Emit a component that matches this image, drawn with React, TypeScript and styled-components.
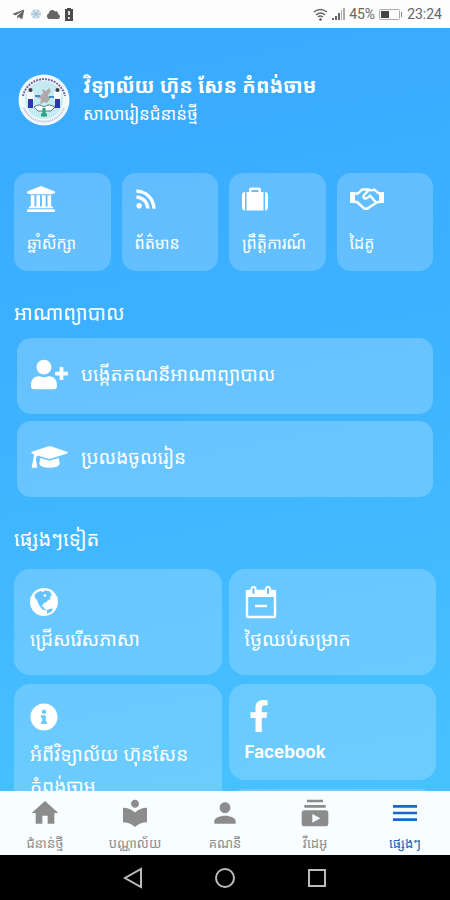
import React from 'react';
import styled, { createGlobalStyle } from 'styled-components';
import {
  FaRss,
  FaUserPlus,
  FaInfoCircle,
  FaFacebookF,
  FaTelegramPlane,
  FaCloud,
} from 'react-icons/fa';
import { MdHome, MdLocalLibrary, MdPerson, MdSubscriptions, MdMenu } from 'react-icons/md';

const GlobalStyle = createGlobalStyle`
  * { box-sizing: border-box; }
  body { margin: 0; font-family: "Noto Sans Khmer", "Noto Sans", "DejaVu Sans", sans-serif; }
  button { font: inherit; color: inherit; border: 0; background: none; padding: 0; text-align: left; cursor: pointer; }
  h1, h2, p { margin: 0; font-weight: 400; }
  svg { display: block; flex: none; }
`;

const Screen = styled.div`
  display: flex;
  flex-direction: column;
  height: 100vh;
  overflow: hidden;
`;

const StatusBar = styled.div`
  display: flex;
  align-items: center;
  justify-content: space-between;
  flex: none;
  height: 28px;
  padding: 0 8px 0 12px;
  background: #fdfdfd;
  color: #666;
  font: 14px Roboto, sans-serif;
`;

const StatusGroup = styled.div<{ $gap: number }>`
  display: flex;
  align-items: center;
  gap: ${(p) => p.$gap}px;
`;

const Content = styled.main`
  flex: 1;
  min-height: 0;
  overflow: hidden;
  padding: 0 14px;
  background: linear-gradient(170deg, #39a9ff 0%, #3db2ff 45%, #48c2ff 100%);
  color: #fff;
`;

const Header = styled.header`
  display: flex;
  align-items: center;
  gap: 13px;
  height: 145px;
  padding: 0 4px 2px;
`;

const Title = styled.h1`
  font-size: 20px;
  line-height: 28px;
  font-weight: 700;
`;

const Subtitle = styled.p`
  font-size: 17px;
  line-height: 28px;
`;

const Shortcuts = styled.nav`
  display: grid;
  grid-template-columns: repeat(4, 1fr);
  gap: 11px;
  padding-right: 3px;
`;

const Shortcut = styled.button`
  && {
    display: flex;
    flex-direction: column;
    justify-content: space-between;
    height: 98px;
    padding: 13px 0 13px 13px;
    border-radius: 14px;
    background: rgba(255, 255, 255, 0.2);
    font-size: 16px;
    line-height: 30px;
    white-space: nowrap;
  }
`;

const IconSlot = styled.span<{ $height: number }>`
  display: flex;
  align-items: center;
  height: ${(p) => p.$height}px;
`;

const SectionTitle = styled.h2`
  height: 67px;
  padding-top: 26px;
  font-size: 20px;
  line-height: 32px;
`;

const Rows = styled.div`
  display: flex;
  flex-direction: column;
  gap: 7px;
  padding: 0 3px;
`;

const Row = styled.button`
  && {
    display: flex;
    align-items: center;
    height: 76px;
    padding: 0 14px 4px;
    gap: 13px;
    border-radius: 14px;
    background: rgba(255, 255, 255, 0.22);
    font-size: 19px;
    line-height: 32px;
  }
`;

const Columns = styled.div`
  display: grid;
  grid-template-columns: 1fr 1fr;
  align-items: start;
  gap: 7px;
  padding-top: 5px;
`;

const Column = styled.div`
  display: flex;
  flex-direction: column;
  gap: 9px;
`;

const Card = styled.button<{ $height: number }>`
  && {
    display: flex;
    flex-direction: column;
    align-items: flex-start;
    gap: 4px;
    min-height: ${(p) => p.$height}px;
    padding: 16px 16px 8px;
    border-radius: 16px;
    background: rgba(255, 255, 255, 0.2);
    font-size: 19px;
    line-height: 32px;
  }
`;

const Latin = styled.span`
  font: 700 17px/32px Inter, sans-serif;
`;

const TabBar = styled.nav`
  display: grid;
  grid-template-columns: repeat(5, 1fr);
  flex: none;
  height: 64px;
  background: #f8fdff;
`;

const Tab = styled.button<{ $active?: boolean }>`
  && {
    display: flex;
    flex-direction: column;
    align-items: center;
    gap: 2px;
    padding-top: 6px;
    color: ${(p) => (p.$active ? '#1769c4' : '#8c8c8c')};
    font-size: 13px;
    line-height: 24px;
    white-space: nowrap;
  }
`;

const SystemBar = styled.div`
  display: flex;
  align-items: center;
  justify-content: center;
  gap: 68px;
  flex: none;
  height: 45px;
  background: #000;
`;

const BankIcon = () => (
  <svg width="28" height="26" viewBox="0 0 1920 1792" fill="currentColor" aria-hidden="true">
    <path d="M960 0l960 384v128h-128q0 26 -20 45t-49 19H197q-28 0-49-19t-20-45H0V384zM256 640h256v768h128V640h256v768h128V640h256v768h128V640h256v768h59q28 0 49 19t20 45v64H128v-64q0-26 20-45t49-19h59zM1851 1600q28 0 49 19t20 45v128H0v-128q0-26 20-45t49-19z" />
  </svg>
);

const SuitcaseIcon = () => (
  <svg width="26" height="24" viewBox="0 0 26 24" fill="#fff" aria-hidden="true">
    <path d="M3 5v18.500Q0 23.500 0 20V8q0-3 3-3zM23 5v18.500q3 0 3-3.500V8q0-3-3-3z" />
    <path d="M4.500 5H7V2.500Q7 .5 9 .5h8q2 0 2 2V5h2.500v18.500h-17zM9.500 5h7V3h-7z" />
  </svg>
);

const HandshakeIcon = () => (
  <svg width="34" height="24" viewBox="0 0 34 24" fill="none" stroke="#fff" strokeWidth="2.400" strokeLinejoin="round" strokeLinecap="round" aria-hidden="true">
    <path d="M0 5h5v11H0zM29 5h5v11h-5z" fill="#fff" stroke="none" />
    <path d="M5 6.500h3l4-4h7l2.500 1L24 2.500l5 4M5 15h2l6 5.500q3 2.500 6 0L27.500 15H29" />
    <path d="M19 3l-5 5q-1.500 3 1 3.500 2 .5 5-3l6 7" />
  </svg>
);

const CapIcon = () => (
  <svg width="37" height="24" viewBox="0 0 38 24" fill="#fff" aria-hidden="true">
    <path d="M1 6.500L17 1.300q2-.6 4 0L37 6.500q1.500 1 0 2L21 13.500q-2 .6-4 0L7 10.500q-2 1-2 4l1.500 7.500q0 1-1 1h-4q-1 0-.8-1L2.500 14q0-3 1-4.500L1 8.500q-1.500-1 0-2z" />
    <path d="M9.500 13l7 2.200q2.500.8 5 0l7-2.200 1 6q-1 4-10.500 4T8.500 19z" />
  </svg>
);

const GlobeIcon = () => (
  <svg width="28" height="28" viewBox="0 0 28 28" aria-hidden="true">
    <circle cx="14" cy="14" r="14" fill="#fff" />
    <path
      fill="#65c4ff"
      d="M4.500 6.500L8 4l3-1 2 1 2-1.500 4 .5 2 2 .5 3-2 1 1.500 2-3 1-1.500 2-2.500 1-1.500 2-1 1 2 1 1 2 2 .5-1 1-3-1-2.500-3L8 15l-1-3-2-2zM17 22l4-1.500 2 .5-2 3-4 1.500z"
    />
    <path fill="#fff" d="M14 6l2.500 1-1 2-2-1z" />
  </svg>
);

const CalendarIcon = () => (
  <svg width="32" height="34" viewBox="0 0 32 34" fill="none" aria-hidden="true">
    <rect x="2" y="6" width="28" height="26" rx="1" stroke="#fff" strokeWidth="2.400" />
    <path d="M1 5h30v7H1z" fill="#fff" />
    <rect x="6.500" y="2" width="4" height="8" rx="2" fill="#60bfff" stroke="#fff" strokeWidth="2" />
    <rect x="21" y="2" width="4" height="8" rx="2" fill="#60bfff" stroke="#fff" strokeWidth="2" />
    <path d="M10 21h12" stroke="#fff" strokeWidth="2.400" />
  </svg>
);

const FacebookIcon = () => <FaFacebookF size={32} viewBox="32 0 320 512" width="20" />;

const SchoolLogo = () => (
  <svg width="52" height="52" viewBox="0 0 52 52" role="img" aria-label="School logo">
    <circle cx="26" cy="26" r="25.500" fill="#f1fafc" />
    <path d="M5 22a21.500 21.500 0 0 1 42 0" fill="none" stroke="#7d63a8" strokeWidth="2" strokeDasharray="2 1" />
    <path d="M6 34a21.500 21.500 0 0 0 40 0" fill="none" stroke="#b9b2d6" strokeWidth="2" strokeDasharray="1 1" />
    <circle cx="26" cy="26" r="19" fill="#c4ebf2" />
    <path d="M9 18h7v9H9zM36 18h7v9h-7z" fill="#f5fbff" />
    <path d="M10 25h5v9h-5zM37 25h5v9h-5z" fill="#2d36b0" />
    <circle cx="12.500" cy="16" r="2" fill="#493a43" />
    <circle cx="39.500" cy="16" r="2" fill="#493a43" />
    <path d="M24 15l4 2 3-3 2 3-3 4 2 4-3 4-3-1-4 2 1-5-5-2 5-2 2-2z" fill="#b0a9ab" />
    <path d="M16 33q5-4 10 0 5-4 11 0l-4 4H20z" fill="#fafdff" stroke="#567b82" strokeWidth="1" />
    <path d="M26 34v6M23 41h6" stroke="#26a184" strokeWidth="3" />
    <path d="M17 22h5M31 23h5" stroke="#438fc4" strokeWidth="2" />
  </svg>
);

const FlakeIcon = () => (
  <svg width="12" height="12" viewBox="0 0 12 12" aria-hidden="true">
    <circle cx="6" cy="6" r="5" fill="#d3e4ef" />
    <path d="M3 2l6 8M9 2L3 10M1 6h10" stroke="#9bb9cc" />
  </svg>
);

const ChargeIcon = () => (
  <svg width="8" height="13" viewBox="0 0 8 13" aria-hidden="true">
    <path d="M2 0h4v1h2v12H0V1h2z" fill="#4b4b4b" />
    <path d="M4 3v4M4 9v2" stroke="#ddd" strokeWidth="2" />
  </svg>
);

const WifiIcon = () => (
  <svg width="15" height="13" viewBox="0 0 15 13" fill="none" stroke="#666" aria-hidden="true">
    <path d="M1 4q6-5 13 0M3 7q5-4 9 0M5 9q2-2 5 0" strokeWidth="1.400" />
    <circle cx="7.500" cy="11.500" r="1" fill="#666" />
  </svg>
);

const SignalIcon = () => (
  <svg width="13" height="12" viewBox="0 0 13 12" aria-hidden="true">
    <path d="M0 12v-2h2v2zM3 12V8h2v4zM6 12V5h2v7z" fill="#666" />
    <path d="M9 12V2h1v10zM11 12V0h2v12z" fill="#aaa" />
  </svg>
);

const BatteryIcon = () => (
  <svg width="24" height="11" viewBox="0 0 24 11" aria-hidden="true">
    <rect x="0.500" y="0.500" width="20" height="10" rx="1" fill="none" stroke="#aaa" />
    <path d="M2 2h8v7H2z" fill="#444" />
    <path d="M22 3h1v5h-1z" fill="#888" />
  </svg>
);

const shortcuts = [
  { label: 'ឆ្នាំសិក្សា', icon: <BankIcon /> },
  { label: 'ព័ត៌មាន', icon: <FaRss size={22} /> },
  { label: 'ព្រឹត្តិការណ៍', icon: <SuitcaseIcon /> },
  { label: 'ដៃគូ', icon: <HandshakeIcon /> },
];

const tabs = [
  { label: 'ជំនាន់ថ្មី', icon: <MdHome size={32} /> },
  { label: 'បណ្ណាល័យ', icon: <MdLocalLibrary size={32} /> },
  { label: 'គណនី', icon: <MdPerson size={32} /> },
  { label: 'វីដេអូ', icon: <MdSubscriptions size={32} /> },
  { label: 'ផ្សេងៗ', icon: <MdMenu size={32} />, active: true },
];

export default function App() {
  return (
    <Screen lang="km">
      <GlobalStyle />
      <StatusBar>
        <StatusGroup $gap={5}>
          <FaTelegramPlane size={13} />
          <FlakeIcon />
          <FaCloud size={13} />
          <ChargeIcon />
        </StatusGroup>
        <StatusGroup $gap={4}>
          <WifiIcon />
          <SignalIcon />
          <span>45%</span>
          <BatteryIcon />
          <span>23:24</span>
        </StatusGroup>
      </StatusBar>
      <Content>
        <Header>
          <SchoolLogo />
          <div>
            <Title>វិទ្យាល័យ ហ៊ុន សែន កំពង់ចាម</Title>
            <Subtitle>សាលារៀនជំនាន់ថ្មី</Subtitle>
          </div>
        </Header>
        <Shortcuts>
          {shortcuts.map((s) => (
            <Shortcut key={s.label}>
              <IconSlot $height={26}>{s.icon}</IconSlot>
              <span>{s.label}</span>
            </Shortcut>
          ))}
        </Shortcuts>
        <SectionTitle>អាណាព្យាបាល</SectionTitle>
        <Rows>
          <Row>
            <FaUserPlus size={37} />
            <span>បង្កើតគណនីអាណាព្យាបាល</span>
          </Row>
          <Row>
            <CapIcon />
            <span>ប្រលងចូលរៀន</span>
          </Row>
        </Rows>
        <SectionTitle>ផ្សេងៗទៀត</SectionTitle>
        <Columns>
          <Column>
            <Card $height={106}>
              <IconSlot $height={34}>
                <GlobeIcon />
              </IconSlot>
              <span>ជ្រើសរើសភាសា</span>
            </Card>
            <Card $height={138}>
              <IconSlot $height={34}>
                <FaInfoCircle size={28} />
              </IconSlot>
              <span>អំពីវិទ្យាល័យ ហ៊ុនសែន កំពង់ចាម</span>
            </Card>
          </Column>
          <Column>
            <Card $height={106}>
              <IconSlot $height={34}>
                <CalendarIcon />
              </IconSlot>
              <span>ថ្ងៃឈប់សម្រាក</span>
            </Card>
            <Card $height={96}>
              <IconSlot $height={32}>
                <FacebookIcon />
              </IconSlot>
              <Latin lang="en">Facebook</Latin>
            </Card>
            <Card $height={96} />
          </Column>
        </Columns>
      </Content>
      <TabBar>
        {tabs.map((t) => (
          <Tab key={t.label} $active={t.active} aria-current={t.active ? 'page' : undefined}>
            {t.icon}
            <span>{t.label}</span>
          </Tab>
        ))}
      </TabBar>
      <SystemBar>
        <svg width="24" height="24" viewBox="0 0 24 24" fill="none" stroke="#bbb" strokeWidth="2" aria-hidden="true">
          <path d="M20 3v18L4 12z" />
        </svg>
        <svg width="24" height="24" viewBox="0 0 24 24" fill="none" stroke="#bbb" strokeWidth="2" aria-hidden="true">
          <circle cx="12" cy="12" r="9" />
        </svg>
        <svg width="24" height="24" viewBox="0 0 24 24" fill="none" stroke="#bbb" strokeWidth="2" aria-hidden="true">
          <rect x="4" y="4" width="16" height="16" />
        </svg>
      </SystemBar>
    </Screen>
  );
}
